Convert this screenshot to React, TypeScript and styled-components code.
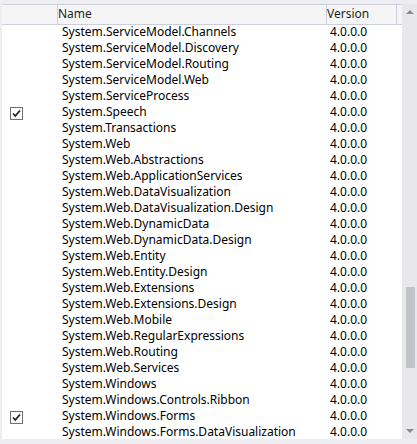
import styled, { createGlobalStyle } from "styled-components";

const GlobalStyle = createGlobalStyle`
  html, body {
    margin: 0;
    padding: 0;
    background: #eeeef2;
  }
  body {
    font-family: "Noto Sans", "Open Sans", sans-serif;
    font-size: 12px;
    color: #1e1e1e;
  }
`;

interface Assembly {
  name: string;
  version: string;
  checked?: boolean;
}

const assemblies: Assembly[] = [
  { name: "System.ServiceModel.Channels", version: "4.0.0.0" },
  { name: "System.ServiceModel.Discovery", version: "4.0.0.0" },
  { name: "System.ServiceModel.Routing", version: "4.0.0.0" },
  { name: "System.ServiceModel.Web", version: "4.0.0.0" },
  { name: "System.ServiceProcess", version: "4.0.0.0" },
  { name: "System.Speech", version: "4.0.0.0", checked: true },
  { name: "System.Transactions", version: "4.0.0.0" },
  { name: "System.Web", version: "4.0.0.0" },
  { name: "System.Web.Abstractions", version: "4.0.0.0" },
  { name: "System.Web.ApplicationServices", version: "4.0.0.0" },
  { name: "System.Web.DataVisualization", version: "4.0.0.0" },
  { name: "System.Web.DataVisualization.Design", version: "4.0.0.0" },
  { name: "System.Web.DynamicData", version: "4.0.0.0" },
  { name: "System.Web.DynamicData.Design", version: "4.0.0.0" },
  { name: "System.Web.Entity", version: "4.0.0.0" },
  { name: "System.Web.Entity.Design", version: "4.0.0.0" },
  { name: "System.Web.Extensions", version: "4.0.0.0" },
  { name: "System.Web.Extensions.Design", version: "4.0.0.0" },
  { name: "System.Web.Mobile", version: "4.0.0.0" },
  { name: "System.Web.RegularExpressions", version: "4.0.0.0" },
  { name: "System.Web.Routing", version: "4.0.0.0" },
  { name: "System.Web.Services", version: "4.0.0.0" },
  { name: "System.Windows", version: "4.0.0.0" },
  { name: "System.Windows.Controls.Ribbon", version: "4.0.0.0" },
  { name: "System.Windows.Forms", version: "4.0.0.0", checked: true },
  { name: "System.Windows.Forms.DataVisualization", version: "4.0.0.0" },
];

const App = () => {
  return (
    <>
      <GlobalStyle />
      <Frame>
        <ListArea>
          <Header>
            <HeaderCell $width={55} />
            <HeaderCell $width={268}>Name</HeaderCell>
            <HeaderCell $width={69}>Version</HeaderCell>
            <HeaderFiller />
          </Header>
          <Rows>
            {assemblies.map((a) => (
              <Row key={a.name}>
                <CheckCell>
                  {a.checked && (
                    <CheckBox>
                      <svg width="11" height="11" viewBox="0 0 11 11">
                        <path d="M2 5.5 L4.3 8 L9 2.5" fill="none" stroke="#1e1e1e" strokeWidth="1.8" />
                      </svg>
                    </CheckBox>
                  )}
                </CheckCell>
                <NameCell>{a.name}</NameCell>
                <VersionCell>{a.version}</VersionCell>
              </Row>
            ))}
          </Rows>
        </ListArea>
        <ScrollBar>
          <Arrow $up />
          <Track>
            <Thumb />
          </Track>
          <Arrow />
        </ScrollBar>
      </Frame>
    </>
  );
};

const Frame = styled.div`
  display: flex;
  width: 417px;
  height: 444px;
  box-sizing: border-box;
  padding: 4px 0 5px 2px;
  background: #eeeef2;
  overflow: hidden;
`;

const ListArea = styled.div`
  width: 400px;
  display: flex;
  flex-direction: column;
  background: #ffffff;
  overflow: hidden;
`;

const Header = styled.div`
  display: flex;
  height: 21px;
  box-sizing: border-box;
  background: #f5f5f5;
  border-top: 1px solid #cccedb;
  border-bottom: 1px solid #cccedb;
  flex-shrink: 0;
`;

const HeaderCell = styled.div<{ $width: number }>`
  width: ${(p) => p.$width}px;
  flex-shrink: 0;
  box-sizing: content-box;
  border-right: 1px solid #cccedb;
  padding-left: 4px;
  margin-left: -4px;
  line-height: 18px;
  color: #1e1e1e;
  &:first-child {
    margin-left: 0;
    padding-left: 0;
  }
`;

const HeaderFiller = styled.div`
  flex: 1;
`;

const Rows = styled.div`
  flex: 1;
  display: flex;
  flex-direction: column;
`;

const Row = styled.div`
  display: flex;
  align-items: flex-start;
  height: 16px;
  line-height: 14px;
  flex-shrink: 0;
`;

const CheckCell = styled.div`
  width: 56px;
  height: 16px;
  flex-shrink: 0;
  padding-left: 8px;
  box-sizing: border-box;
  display: flex;
  align-items: center;
`;

const CheckBox = styled.div`
  width: 11px;
  height: 11px;
  border: 1px solid #717171;
  background: #ffffff;
  display: flex;
  align-items: center;
  justify-content: center;
`;

const NameCell = styled.div`
  width: 268px;
  flex-shrink: 0;
  padding-left: 4px;
  box-sizing: border-box;
  white-space: nowrap;
  color: #000000;
`;

const VersionCell = styled.div`
  padding-left: 4px;
  white-space: nowrap;
  color: #000000;
`;

const ScrollBar = styled.div`
  width: 15px;
  flex-shrink: 0;
  display: flex;
  flex-direction: column;
  background: #e8e8ec;
`;

const Arrow = styled.div<{ $up?: boolean }>`
  height: 16px;
  flex-shrink: 0;
  display: flex;
  align-items: center;
  justify-content: center;
  &::after {
    content: "";
    width: 0;
    height: 0;
    border-left: 4px solid transparent;
    border-right: 4px solid transparent;
    ${(p) =>
      p.$up ? "border-bottom: 4px solid #868999;" : "border-top: 4px solid #868999;"}
  }
`;

const Track = styled.div`
  flex: 1;
  position: relative;
`;

const Thumb = styled.div`
  position: absolute;
  left: 4px;
  width: 9px;
  top: 267px;
  height: 81px;
  background: #c2c3c9;
`;

export default App;
